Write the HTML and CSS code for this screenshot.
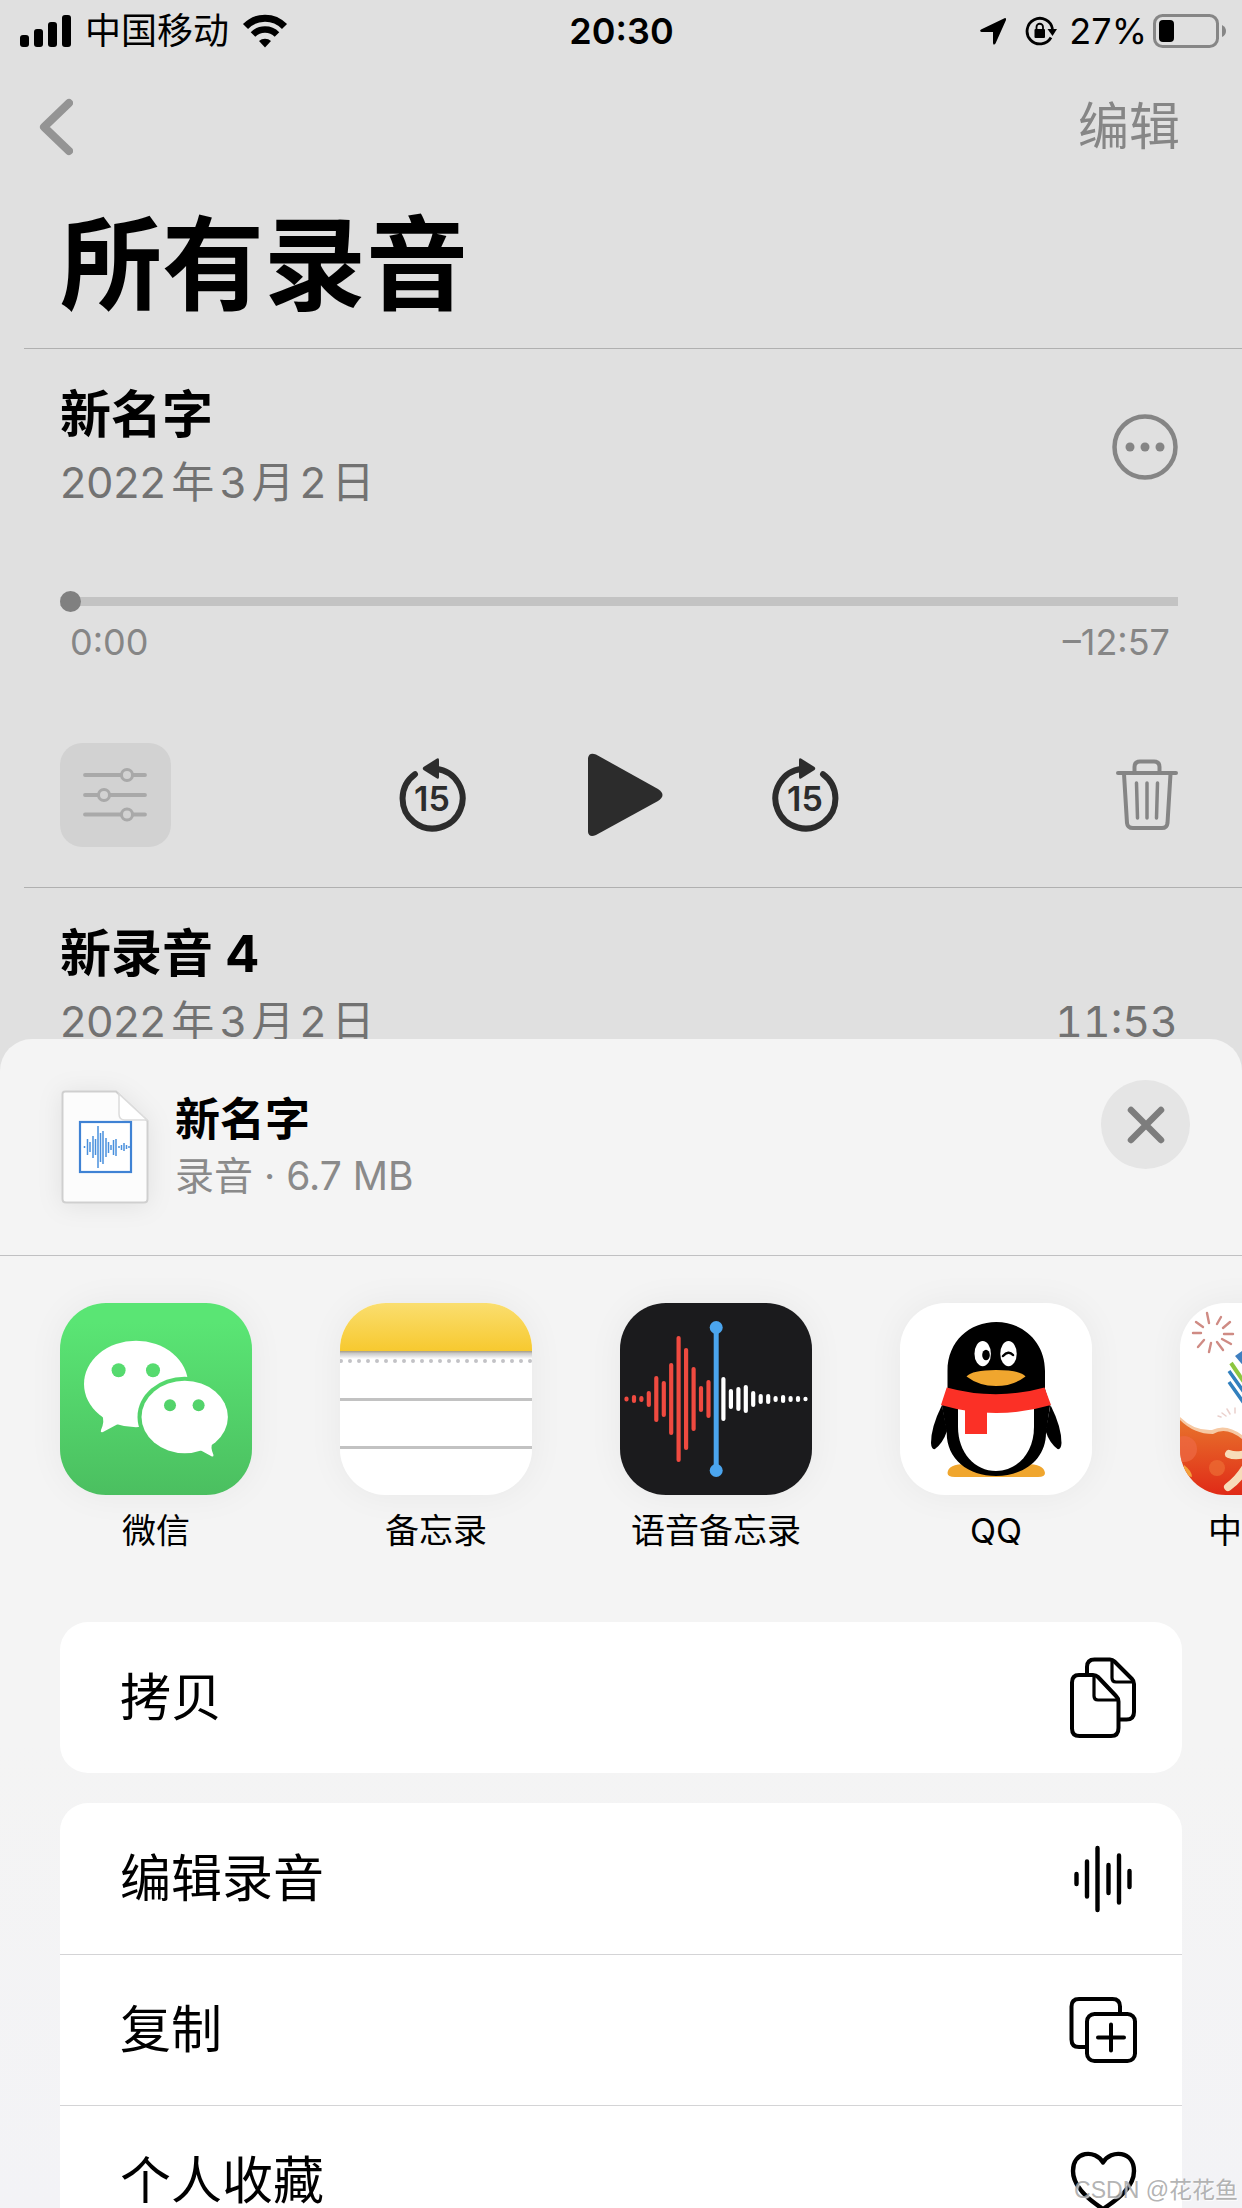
FILE: index.html
```html
<!DOCTYPE html>
<html lang="zh-CN">
<head>
    <meta charset="UTF-8">
    <meta name="viewport" content="width=device-width, initial-scale=1.0">
    <title>所有录音</title>
    <link rel="stylesheet" href="styles.css">
</head>
<body>
    <div class="status-bar">
        <div class="status-left">
            <svg width="56" height="32" viewBox="-4 0 56 32">
                <rect x="0" y="20" width="9" height="12" rx="3"/>
                <rect x="14" y="14" width="9" height="18" rx="3"/>
                <rect x="28" y="7" width="9" height="25" rx="3"/>
                <rect x="42" y="0" width="9" height="32" rx="3"/>
            </svg>
            <span>中国移动</span>
            <svg class="wifi" width="46" height="34" viewBox="0 0 46 34">
                <path d="M3.500 12.500 A27 27 0 0 1 42.500 12.500" fill="none" stroke="#000" stroke-width="7"/>
                <path d="M11 20.500 A17 17 0 0 1 35 20.500" fill="none" stroke="#000" stroke-width="6.500"/>
                <path d="M17 27 A9 9 0 0 1 29 27 L23 33.500 Z"/>
            </svg>
        </div>
        <div class="status-time">20:30</div>
        <div class="status-right">
            <svg width="26" height="27" viewBox="0 0 26 27">
                <path d="M25 0 Q26.500 0 26 2 L15.500 25.500 Q13.500 28 13 25 V14 H1.500 Q-1 13 1 11.500 Z"/>
            </svg>
            <svg class="lock" width="32" height="30" viewBox="0 0 32 30">
                <path d="M26 21.500 A12.800 12.800 0 1 1 27.500 13" fill="none" stroke="#000" stroke-width="2.800"/>
                <path d="M22.500 13 H32 L27.500 20 Z"/>
                <rect x="9.500" y="13" width="10.500" height="9" rx="1"/>
                <path d="M11.500 13 V11 A3.200 3.200 0 0 1 18 11 V13" fill="none" stroke="#000" stroke-width="1.800"/>
            </svg>
            <span>27%</span>
            <svg width="74" height="34" viewBox="0 0 74 34">
                <rect x="1.500" y="1.500" width="63" height="31" rx="8" fill="none" stroke="#868686" stroke-width="3"/>
                <rect x="6" y="6" width="15" height="22" rx="4"/>
                <path d="M69 11 Q73 13 73 17 Q73 21 69 23 Z" fill="#868686"/>
            </svg>
        </div>
    </div>

    <div class="nav">
        <button class="back" aria-label="返回">
            <svg width="34" height="58" viewBox="0 0 34 58">
                <path d="M30 5 L5 29 L30 53" fill="none" stroke="#949494" stroke-width="8" stroke-linecap="round" stroke-linejoin="round"/>
            </svg>
        </button>
        <button class="edit">编辑</button>
    </div>

    <h1>所有录音</h1>

    <div class="memo open">
        <div class="memo-head">
            <div class="memo-info">
                <h2>新名字</h2>
                <p class="date">2022年3月2日</p>
            </div>
            <button class="more" aria-label="更多">
                <svg width="66" height="66" viewBox="0 0 66 66" fill="#858585">
                    <circle cx="33" cy="33" r="30.500" fill="none" stroke="#858585" stroke-width="4.500"/>
                    <circle cx="18" cy="33" r="4.500"/>
                    <circle cx="33" cy="33" r="4.500"/>
                    <circle cx="48" cy="33" r="4.500"/>
                </svg>
            </button>
        </div>
        <input class="progress" type="range" min="0" max="777" value="0" aria-label="播放进度">
        <div class="times">
            <span>0:00</span>
            <span>–12:57</span>
        </div>
        <div class="controls">
            <button class="options" aria-label="选项">
                <svg width="66" height="54" viewBox="0 0 66 54" fill="#d2d2d2" stroke="#a9a9a9">
                    <path d="M2 7 H62 M2 27 H62 M2 46.500 H62" stroke-width="3.800" stroke-linecap="round"/>
                    <circle cx="44" cy="7" r="5.500" stroke-width="3"/>
                    <circle cx="21" cy="27" r="5.500" stroke-width="3"/>
                    <circle cx="44" cy="46.500" r="5.500" stroke-width="3"/>
                </svg>
            </button>
            <div class="playback">
                <button aria-label="后退15秒">
                    <svg width="67" height="74" viewBox="0 0 67 74" fill="#2c2c2c">
                        <path d="M37 10.700 A30 30 0 1 1 16 16.200" fill="none" stroke="#2c2c2c" stroke-width="6" stroke-linecap="round"/>
                        <path d="M38 .5 Q40 -.5 40 2 V19 Q40 21.500 38 20.500 L24.500 12 Q23 10.500 24.500 9 Z"/>
                        <text class="skip" x="33" y="53" text-anchor="middle">15</text>
                    </svg>
                </button>
                <button aria-label="播放">
                    <svg width="90" height="84" viewBox="0 0 90 84">
                        <path d="M14 5 Q15 -1 22 1.500 L84 36 Q93 42 84 48 L22 82 Q15 85 14 79 Z" fill="#2c2c2c"/>
                    </svg>
                </button>
                <button aria-label="前进15秒">
                    <svg width="67" height="74" viewBox="0 0 67 74" fill="#2c2c2c">
                        <path d="M30 10.700 A30 30 0 1 0 51 16.200" fill="none" stroke="#2c2c2c" stroke-width="6" stroke-linecap="round"/>
                        <path d="M29 .5 Q27 -.5 27 2 V19 Q27 21.500 29 20.500 L42.500 12 Q44 10.500 42.500 9 Z"/>
                        <text class="skip" x="33" y="53" text-anchor="middle">15</text>
                    </svg>
                </button>
            </div>
            <button class="trash" aria-label="删除">
                <svg width="62" height="72" viewBox="0 0 62 72" fill="none" stroke="#858585" stroke-width="4" stroke-linecap="round">
                    <path d="M2 14 H60"/>
                    <path d="M18.500 13 V8 Q18.500 2.500 24 2.500 H38 Q43.500 2.500 43.500 8 V13"/>
                    <path d="M8 15 L11 64 Q11.500 69 17 69 H46 Q51 69 51.500 64 L54.500 15"/>
                    <path d="M20.500 24 L21.500 59 M31 24 V59 M41.500 24 L40.500 59" stroke-width="3.500"/>
                </svg>
            </button>
        </div>
    </div>

    <div class="memo">
        <div class="memo-head">
            <div class="memo-info">
                <h2>新录音 4</h2>
                <p class="date">2022年3月2日</p>
            </div>
            <p class="length">11:53</p>
        </div>
    </div>

    <!-- Share sheet -->
    <div class="sheet">
        <div class="sheet-head">
            <div class="file">
                <svg class="file-icon" width="88" height="114" viewBox="0 0 88 114">
                    <path d="M4 1.500 H55 L86.500 31 V109 Q86.500 112.500 83 112.500 H5 Q1.500 112.500 1.500 109 V4 Q1.500 1.500 4 1.500 Z" fill="#fcfcfc" stroke="#cfcfcf" stroke-width="2"/>
                    <path d="M58 4 V24 Q58 30 64 30 H86 Z" fill="#fff" stroke="#dcdcdc" stroke-width="1.500"/>
                    <rect x="19" y="32" width="51" height="50" fill="#fff" stroke="#3f82d4" stroke-width="2.200"/>
                    <path d="M23.500 56V58 M26.500 49V65 M29 52V62 M32 46V68 M34.500 49V65 M37 36V78 M39.500 43V72 M42 41V74 M45 48V67 M47.500 52V63 M50 55V60 M52.500 50V65 M55 49V66 M58 56V58 M60.500 55V60 M63 53V61 M65.500 55V59 M68 56V58" stroke="#4a90dd" stroke-width="1.500"/>
                </svg>
                <div class="file-info">
                    <h3>新名字</h3>
                    <p>录音 · 6.7 MB</p>
                </div>
            </div>
            <button class="close" aria-label="关闭">
                <svg width="40" height="40" viewBox="0 0 40 40">
                    <path d="M5 5 L35 35 M35 5 L5 35" stroke="#7d7d7d" stroke-width="6.500" stroke-linecap="round"/>
                </svg>
            </button>
        </div>

        <div class="apps">
            <a class="app" href="#">
                <svg width="192" height="192" viewBox="0 0 192 192">
                    <defs>
                        <linearGradient id="green" gradientUnits="userSpaceOnUse" x1="0" y1="0" x2="0" y2="192">
                            <stop offset="0.100" stop-color="#5ae574"/>
                            <stop offset="1" stop-color="#4bbf60"/>
                        </linearGradient>
                    </defs>
                    <rect width="192" height="192" fill="url(#green)"/>
                    <ellipse cx="76" cy="81" rx="52" ry="43.300" fill="#fff"/>
                    <path d="M42 112 Q45 118 41 127 Q40 130 43 129 L58 121 Z" fill="#fff"/>
                    <ellipse cx="124.700" cy="114" rx="47.200" ry="40.200" fill="url(#green)"/>
                    <ellipse cx="124.700" cy="114" rx="43.200" ry="36.200" fill="#fff"/>
                    <path d="M152.500 140 Q150 144 153.500 152 Q153.500 154.500 151 153 L140 147 Z" fill="#fff"/>
                    <g fill="url(#green)">
                        <circle cx="58.600" cy="67.300" r="7"/>
                        <circle cx="93" cy="67.300" r="7"/>
                        <circle cx="110" cy="102.300" r="6"/>
                        <circle cx="138.600" cy="102.300" r="6"/>
                    </g>
                </svg>
                <span>微信</span>
            </a>
            <a class="app" href="#">
                <svg width="192" height="192" viewBox="0 0 192 192">
                    <defs>
                        <linearGradient id="yellow" x1="0" y1="0" x2="0" y2="1">
                            <stop offset="0" stop-color="#fade6f"/>
                            <stop offset="1" stop-color="#f7c92f"/>
                        </linearGradient>
                        <linearGradient id="crease" x1="0" y1="0" x2="0" y2="1">
                            <stop offset="0" stop-color="#a59b84"/>
                            <stop offset="0.300" stop-color="#c9c9c9"/>
                            <stop offset="1" stop-color="#fff"/>
                        </linearGradient>
                    </defs>
                    <rect width="192" height="192" fill="#fff"/>
                    <rect width="192" height="48" fill="url(#yellow)"/>
                    <rect y="48" width="192" height="8" fill="url(#crease)"/>
                    <path d="M1 58 H192" stroke="#c2c2c6" stroke-width="4" stroke-linecap="round" stroke-dasharray="0 9"/>
                    <path d="M0 96.500 H192 M0 144.500 H192" stroke="#c2c2c2" stroke-width="2.800"/>
                </svg>
                <span>备忘录</span>
            </a>
            <a class="app" href="#">
                <svg width="192" height="192" viewBox="0 0 192 192" stroke-width="4.200" stroke-linecap="round">
                    <rect width="192" height="192" fill="#1b1b1d"/>
                    <path d="M6.500 95.500V96.500 M14 94V98 M21.400 95V97 M28.800 90V102 M36.300 75V117 M43.800 80V112 M51.200 62V130 M58.600 35V157 M66.100 47V145 M73.600 66V126 M81 85V107 M88.500 79V113" stroke="#f04a40"/>
                    <path d="M103.400 76V116 M110.900 88V104 M118.400 86V106 M125.800 84V108 M133.200 90V102 M140.700 93V99 M148.200 93V99 M155.600 95V97 M163.100 94V98 M170.600 95V97 M178 95V97 M185.500 95.800V96.200" stroke="#fff"/>
                    <path d="M96.200 25 V167" stroke="#4ba5ee" stroke-width="5"/>
                    <circle cx="96.200" cy="24.500" r="6.500" fill="#4ba5ee"/>
                    <circle cx="96.200" cy="167.500" r="6.500" fill="#4ba5ee"/>
                </svg>
                <span>语音备忘录</span>
            </a>
            <a class="app" href="#">
                <svg width="192" height="192" viewBox="0 0 192 192">
                    <rect width="192" height="192" fill="#fff"/>
                    <path d="M47.500 170 Q48 161 66 161 L96 168 L126 161 Q144 161 145 170 Q145 174 138 174 H55 Q47.500 174 47.500 170 Z" fill="#f0a62e"/>
                    <path d="M42 102 Q31 124 31 140 Q31.500 147 35 146 Q43 140 47 128 Z"/>
                    <path d="M150.500 102 Q161.500 124 161.500 140 Q161 147 157.500 146 Q149.500 140 145.500 128 Z"/>
                    <path d="M47.500 86 V68 C47.500 38 70 19 96.200 19 C122 19 145 38 145 68 V86 L150 103 L146 130 C146 156 124 173 96.200 173 C68 173 46.700 156 46.700 130 L42 103 Z"/>
                    <path d="M58 100 H134 V124 C134 150 117 168 96 168 C75 168 58 150 58 124 Z" fill="#fff"/>
                    <path d="M46.700 84.500 Q96 98 144.500 84.500 L151 102 Q96 118 41 102 Z" fill="#fb3026"/>
                    <path d="M65 104 H87 V131 H65 Z" fill="#fb3026"/>
                    <ellipse cx="82.700" cy="50.700" rx="8.200" ry="12.600" fill="#fff"/>
                    <ellipse cx="108.500" cy="50.700" rx="8.200" ry="12.600" fill="#fff"/>
                    <ellipse cx="86" cy="52" rx="3.800" ry="5.200"/>
                    <path d="M103 53 Q108.500 47 113 52" fill="none" stroke="#000" stroke-width="2.500" stroke-linecap="round"/>
                    <path d="M66.500 73.500 Q72 67 96 67 Q120 67 125.500 73.500 Q113 83 96 83 Q79 83 66.500 73.500 Z" fill="#f0a62e"/>
                </svg>
                <span>QQ</span>
            </a>
            <a class="app" href="#">
                <svg width="192" height="192" viewBox="0 0 192 192">
                    <defs>
                        <linearGradient id="orange" x1="0" y1="0" x2="0" y2="1">
                            <stop offset="0" stop-color="#e8732c"/>
                            <stop offset="1" stop-color="#e02a17"/>
                        </linearGradient>
                    </defs>
                    <rect width="192" height="192" fill="#fff"/>
                    <g stroke="#cf8b84" stroke-width="2.400" stroke-linecap="round">
                        <path d="M29 20 L27 10 M37 21 L41 14 M43 25 L50 19 M44 31 L53 31 M42 36 L51 41 M37 39 L43 47 M31 40 L29 49 M24 37 L18 44 M21 30 L13 30 M23 24 L16 19"/>
                        <path d="M47 106 L50 111 M42 110 L46 113 M38 113 L41 114 M55 105 V110" stroke="#ead0cc" stroke-width="1.500"/>
                    </g>
                    <path d="M55 53 L66 45 V66 Z" fill="#3f7fc0"/>
                    <path d="M51 60 L66 82" stroke="#8dc63f" stroke-width="4"/>
                    <path d="M49 68 L66 92 M49 79 L66 103" stroke="#3280be" stroke-width="3.500"/>
                    <path d="M0 114 Q14 128 32 127 Q46 120 62 132 Q130 150 192 120 V192 H0 Z" fill="#f6c9a4"/>
                    <path d="M0 117 Q14 131 33 131 Q46 123 62 136 Q130 154 192 124 V192 H0 Z" fill="url(#orange)"/>
                    <circle cx="4" cy="146" r="13" fill="#ee6a45" opacity="0.700"/>
                    <circle cx="37" cy="165" r="8" fill="#ec6d35" opacity="0.700"/>
                    <path d="M49 151 Q56 154 70 150 M66 164 Q58 177 48 184" fill="none" stroke="#f7dcb9" stroke-width="8" stroke-linecap="round"/>
                    <path d="M4 162 Q12 168 12 174 L4 172 Z" fill="#f3a03a"/>
                </svg>
                <span>中国移动</span>
            </a>
        </div>

        <div class="actions">
            <div class="card">
                <button class="action">
                    <span>拷贝</span>
                    <svg width="68" height="82" viewBox="0 0 68 82" fill="none" stroke="#000" stroke-width="4" stroke-linejoin="round">
                        <path d="M18 17 V10 Q18 2.500 25.500 2.500 H41 Q43.500 2.500 45.500 4.500 L63 22 Q65 24 65 27 V55 Q65 62.500 57.500 62.500 H51"/>
                        <path d="M43 3 V21 Q43 25 47 25 H64" stroke-width="3.200"/>
                        <path d="M10 18 H24 Q27 18 29 20 L47 39 Q49.500 41.500 49.500 44.500 V71 Q49.500 79 42 79 H10.500 Q3 79 3 71.500 V25.500 Q3 18 10 18 Z"/>
                        <path d="M25 19 V39 Q25 43 29 43 H49" stroke-width="3.200"/>
                    </svg>
                </button>
            </div>
            <div class="card">
                <button class="action">
                    <span>编辑录音</span>
                    <svg width="68" height="68" viewBox="0 0 68 68" fill="none" stroke="#000" stroke-width="4.400" stroke-linecap="round">
                        <path d="M7.500 29V39 M18 16.500V51.500 M28.500 3V65 M39.500 20V48 M50 10.500V57.500 M60.500 26V42"/>
                    </svg>
                </button>
                <button class="action">
                    <span>复制</span>
                    <svg width="68" height="68" viewBox="0 0 68 68" fill="none" stroke="#000" stroke-width="4" stroke-linecap="round">
                        <path d="M17 51 H10 Q2.500 51 2.500 43.500 V10.500 Q2.500 3 10 3 H43.500 Q51 3 51 10.500 V17" stroke-linecap="butt"/>
                        <rect x="18" y="18" width="48" height="47" rx="7.500"/>
                        <path d="M42 28.500 V54.500 M29 41.500 H55"/>
                    </svg>
                </button>
                <button class="action">
                    <span>个人收藏</span>
                    <svg width="68" height="62" viewBox="0 0 68 62" fill="none" stroke="#000" stroke-width="4.400" stroke-linejoin="round">
                        <path d="M34 12.500 C26 -1 4 1 4 21 C4 36 17 48 34 59 C51 48 65 36 65 21 C65 1 42 -1 34 12.500 Z"/>
                    </svg>
                </button>
            </div>
        </div>
    </div>

    <div class="watermark">CSDN @花花鱼</div>
</body>
</html>
```

FILE: styles.css
```css
* {
    box-sizing: border-box;
}
body {
    margin: 0;
    height: 100vh;
    overflow: hidden;
    font-family: Inter, "Noto Sans CJK SC", sans-serif;
    background-color: #e0e0e0;
    color: #000;
}
h1, h2, h3, p {
    margin: 0;
}
button {
    padding: 0;
    border: none;
    background: none;
    color: inherit;
    font-family: inherit;
    cursor: pointer;
}
svg {
    display: block;
    flex: none;
}

/* Status bar */
.status-bar {
    display: grid;
    grid-template-columns: 1fr auto 1fr;
    align-items: center;
    height: 62px;
    padding: 0 15px 0 16px;
    font-size: 36px;
    line-height: 44px;
}
.status-left, .status-right {
    display: flex;
    align-items: center;
}
.status-left {
    gap: 13px;
}
.status-right {
    justify-content: flex-end;
    gap: 6px;
}
.lock {
    margin: 0 6px 0 13px;
}
.status-time {
    font-weight: 600;
}

.nav {
    display: flex;
    align-items: center;
    justify-content: space-between;
    height: 129px;
    padding: 0 62px 0 39px;
}
.edit {
    font-size: 51px;
    line-height: 62px;
    color: #868686;
}
h1 {
    padding: 14px 60px 23px;
    font-size: 102px;
    line-height: 120px;
}

/* Recordings */
.memo {
    margin-left: 24px;
    padding: 35px 64px 40px 36px;
    border-top: 1px solid #b0b0b0;
}
.memo-head {
    display: flex;
    justify-content: space-between;
}
.memo-info {
    display: flex;
    flex-direction: column;
    gap: 8px;
}
h2 {
    font-size: 51px;
    line-height: 62px;
}
.date, .length {
    font-size: 43px;
    line-height: 56px;
    color: #727272;
}
.date {
    text-autospace: normal;
}
.length {
    align-self: flex-end;
    font-variant-numeric: tabular-nums;
}
.more {
    align-self: center;
}
.progress {
    display: block;
    appearance: none;
    width: 100%;
    height: 22px;
    margin: 80px 0 0;
    background: linear-gradient(#c3c3c3, #c3c3c3) center / 100% 9px no-repeat;
    border-radius: 4px;
}
.progress::-webkit-slider-thumb {
    appearance: none;
    width: 21px;
    height: 21px;
    border-radius: 50%;
    background-color: #808080;
}
.times {
    display: flex;
    justify-content: space-between;
    margin: 8px 0 79px;
    padding: 0 8px 0 10px;
    font-size: 36px;
    line-height: 44px;
    color: #868686;
}
.controls {
    display: grid;
    grid-template-columns: 1fr auto 1fr;
    align-items: center;
}
.options {
    display: flex;
    align-items: center;
    justify-content: center;
    width: 111px;
    height: 104px;
    border-radius: 22px;
    background-color: #d2d2d2;
}
.playback {
    display: flex;
    align-items: center;
    gap: 108px;
}
.skip {
    font-size: 34px;
    font-weight: 600;
}
.trash {
    justify-self: end;
}

/* Share sheet */
.sheet {
    position: absolute;
    top: 1039px;
    left: 0;
    right: 0;
    bottom: 0;
    overflow: hidden;
    border-radius: 32px 32px 0 0;
    background: linear-gradient(#f4f4f4 60%, #f3f3f6);
}
.sheet-head {
    display: flex;
    justify-content: space-between;
    padding: 41px 52px 51px 61px;
    border-bottom: 1px solid #c0c0c2;
}
.file {
    display: flex;
    gap: 26px;
    padding-top: 10px;
}
.file-icon {
    filter: drop-shadow(0 2px 12px rgba(0, 0, 0, 0.08));
}
.file-info {
    display: flex;
    flex-direction: column;
    justify-content: flex-end;
}
h3 {
    font-size: 45px;
    line-height: 56px;
}
.file-info p {
    font-size: 39px;
    line-height: 56px;
    color: #8a8a8a;
}
.close {
    display: flex;
    align-items: center;
    justify-content: center;
    width: 89px;
    height: 89px;
    border-radius: 50%;
    background-color: #e5e5e5;
}
.apps {
    display: flex;
    gap: 88px;
    padding: 47px 60px 69px;
    overflow: hidden;
}
.app {
    display: flex;
    flex: none;
    flex-direction: column;
    align-items: center;
    gap: 14px;
    width: 192px;
    font-size: 34px;
    line-height: 44px;
    color: #000;
    text-decoration: none;
    white-space: nowrap;
}
.app svg {
    border-radius: 46px;
    box-shadow: 0 0 36px rgba(0, 0, 0, 0.05);
}
.actions {
    display: flex;
    flex-direction: column;
    gap: 30px;
    padding: 0 60px;
}
.card {
    border-radius: 28px;
    background-color: #fff;
}
.action {
    display: flex;
    align-items: center;
    justify-content: space-between;
    width: 100%;
    height: 151px;
    padding: 0 45px 0 60px;
    font-size: 51px;
    line-height: 62px;
}
.action + .action {
    border-top: 1px solid #d4d4d6;
}

.watermark {
    position: absolute;
    right: 4px;
    bottom: 2px;
    font-family: "Liberation Sans", "Noto Sans CJK SC", sans-serif;
    font-size: 23px;
    line-height: 32px;
    color: rgba(160, 160, 160, 0.8);
    text-shadow: 1px 1px 1px rgba(255, 255, 255, 0.8);
}
```
